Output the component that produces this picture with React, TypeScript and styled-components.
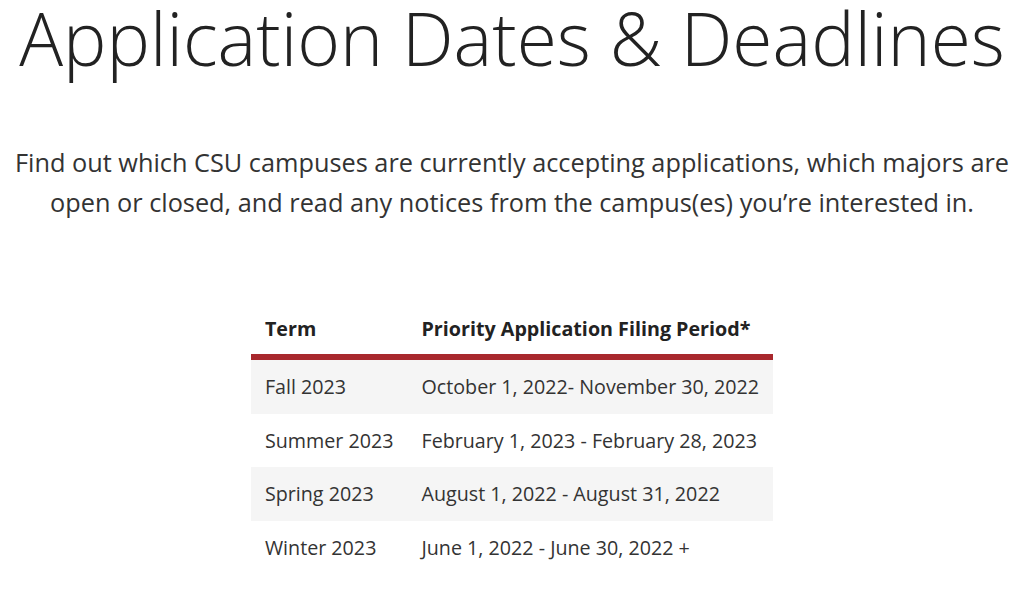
import React from "react";
import styled, { createGlobalStyle } from "styled-components";

type Deadline = {
  term: string;
  period: string;
};

const deadlines: Deadline[] = [
  { term: "Fall 2023", period: "October 1, 2022- November 30, 2022" },
  { term: "Summer 2023", period: "February 1, 2023 - February 28, 2023" },
  { term: "Spring 2023", period: "August 1, 2022 - August 31, 2022" },
  { term: "Winter 2023", period: "June 1, 2022 - June 30, 2022 +" },
];

const GlobalStyle = createGlobalStyle`
  body {
    margin: 0;
    background: #fff;
    font-family: "Open Sans", "Liberation Sans", sans-serif;
    color: #333;
  }
`;

export default function App() {
  return (
    <>
      <GlobalStyle />
      <StyledPage>
        <StyledTitle>Application Dates &amp; Deadlines</StyledTitle>
        <StyledIntro>
          Find out which CSU campuses are currently accepting applications,
          which majors are open or closed, and read any notices from the
          campus(es) you’re interested in.
        </StyledIntro>
        <StyledTable>
          <thead>
            <tr>
              <StyledHeadCell>Term</StyledHeadCell>
              <StyledHeadCell>Priority Application Filing Period*</StyledHeadCell>
            </tr>
          </thead>
          <tbody>
            {deadlines.map((d, i) => (
              <StyledRow key={d.term} $striped={i % 2 === 0}>
                <StyledCell>{d.term}</StyledCell>
                <StyledCell>{d.period}</StyledCell>
              </StyledRow>
            ))}
          </tbody>
        </StyledTable>
      </StyledPage>
    </>
  );
}

const StyledPage = styled.main`
  display: flex;
  flex-direction: column;
  align-items: center;
  width: 1024px;
  height: 602px;
  overflow: hidden;
`;

const StyledTitle = styled.h1`
  margin: 1px 0 0;
  font-size: 73px;
  line-height: 74px;
  font-weight: 300;
  color: #222;
  white-space: nowrap;
`;

const StyledIntro = styled.p`
  margin: 67px 0 0;
  width: 1010px;
  text-align: center;
  font-size: 25.3px;
  line-height: 40px;
  color: #333;
`;

const StyledTable = styled.table`
  margin-top: 83px;
  width: 522px;
  border-collapse: collapse;
  font-size: 19.7px;
  color: #333;
`;

const StyledHeadCell = styled.th`
  text-align: left;
  font-weight: 700;
  color: #222;
  padding: 10px 14px 12px;
  border-bottom: 6px solid #a8282d;

  &:first-child {
    width: 143px;
  }
`;

const StyledRow = styled.tr<{ $striped: boolean }>`
  background: ${(p) => (p.$striped ? "#f5f5f5" : "#fff")};
`;

const StyledCell = styled.td`
  padding: 13px 14px;
  line-height: 27.5px;
  white-space: nowrap;
`;
